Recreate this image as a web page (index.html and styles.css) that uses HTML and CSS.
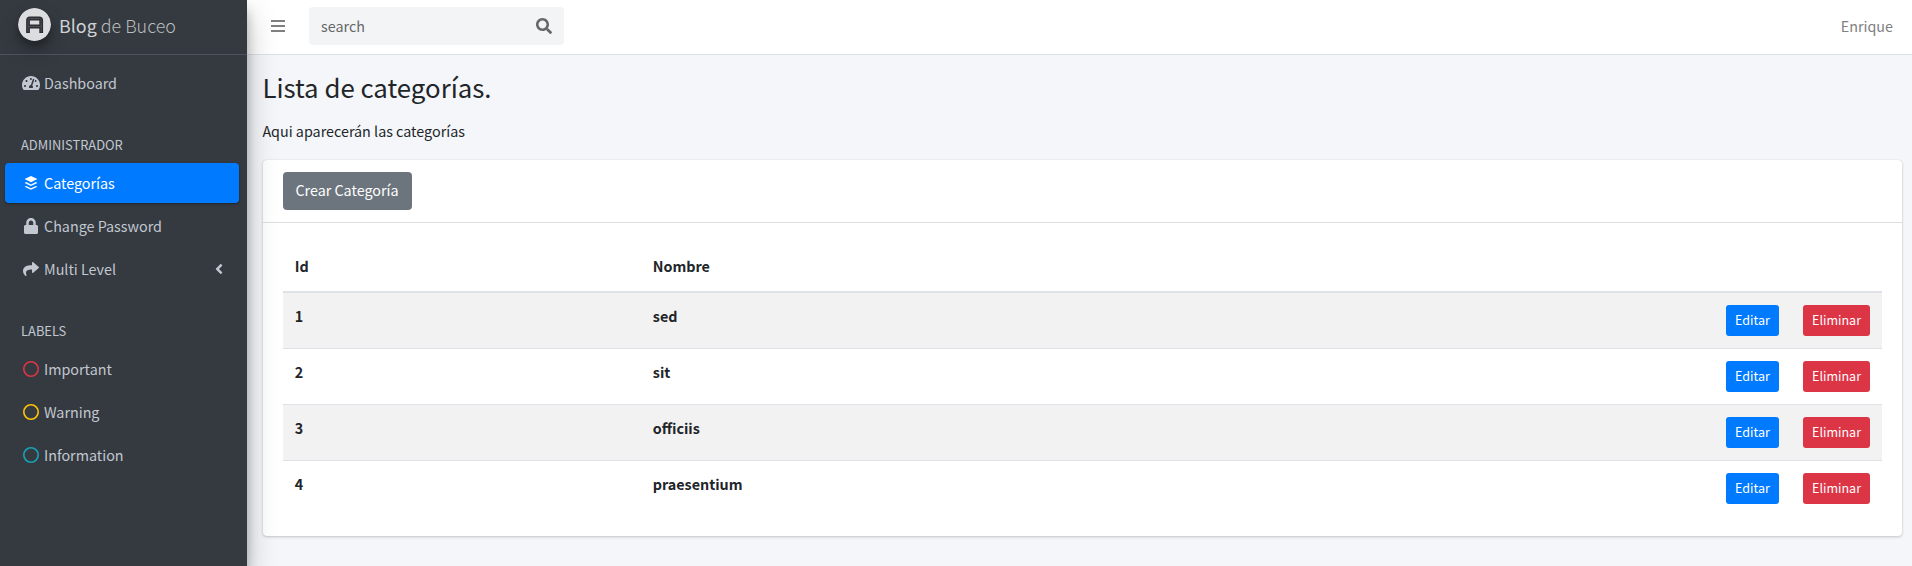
FILE: index.html
```html
<!DOCTYPE html>
<html lang="es">
<head>
<meta charset="utf-8">
<title>Blog de Buceo</title>
<link rel="stylesheet" href="styles.css">
</head>
<body>
<div class="wrapper">
  <aside class="sidebar">
    <a class="brand">
      <svg class="brand-logo" viewBox="0 0 33 33"><circle cx="16.5" cy="16.5" r="16.5" fill="#dcddde"/><path d="M10 25V12.500Q10 10.500 12 10.500H21.200Q23.200 10.500 23.200 12.500V25M10 18.500H23.200" fill="none" stroke="#2c2f33" stroke-width="3.800"/><path d="M10 24V12.500Q10 10.500 12 10.500H21.200Q23.200 10.500 23.200 12.500V24M10 18.500H23.200" fill="none" stroke="#53575b" stroke-width=".8"/></svg>
      <span class="brand-text"><span class="brand-strong">Blog</span> de Buceo</span>
    </a>
    <nav class="nav">
      <a class="nav-link"><span class="nav-icon"><svg width="18" height="16" viewBox="0 0 576 512"><path fill="currentColor" d="M288 32C128.94 32 0 160.94 0 320c0 52.8 14.25 102.26 39.06 144.8 5.61 9.62 16.3 15.2 27.44 15.2h443c11.14 0 21.83-5.58 27.44-15.2C561.75 422.26 576 372.8 576 320c0-159.06-128.94-288-288-288zm0 64c14.71 0 26.58 10.13 30.32 23.65-1.11 2.26-2.64 4.23-3.45 6.67l-9.22 27.67c-5.13 3.49-10.97 6.01-17.64 6.01-17.67 0-32-14.33-32-32S270.33 96 288 96zM96 384c-17.67 0-32-14.33-32-32s14.33-32 32-32 32 14.33 32 32-14.33 32-32 32zm48-160c-17.67 0-32-14.33-32-32s14.33-32 32-32 32 14.33 32 32-14.33 32-32 32zm246.77-72.41l-61.33 184C343.13 347.33 352 364.54 352 384c0 11.72-3.38 22.55-8.88 32H232.88c-5.5-9.45-8.88-20.28-8.88-32 0-33.94 26.5-61.43 59.9-63.59l61.34-184.01c4.17-12.56 17.73-19.45 30.36-15.17 12.57 4.19 19.35 17.79 15.17 30.36zm14.66 57.2l15.52-46.55c3.47-1.29 7.13-2.23 11.05-2.23 17.67 0 32 14.33 32 32s-14.33 32-32 32c-11.38-.01-20.89-6.28-26.57-15.22zM480 384c-17.67 0-32-14.33-32-32s14.33-32 32-32 32 14.33 32 32-14.33 32-32 32z"/></svg></span>Dashboard</a>
      <div class="nav-header">ADMINISTRADOR</div>
      <a class="nav-link active"><span class="nav-icon"><svg width="14" height="16" viewBox="0 0 14 16"><path fill="currentColor" d="M7 1L13.4 4.1L7 7.2L.6 4.1Z"/><path fill="currentColor" d="M.6 7.9L2.2 7.1L7 9.4L11.8 7.1L13.4 7.9L7 11ZM.6 11.7L2.2 10.9L7 13.2L11.8 10.9L13.4 11.7L7 14.8Z"/></svg></span>Categorías</a>
      <a class="nav-link"><span class="nav-icon"><svg width="14" height="16" viewBox="0 0 448 512"><path fill="currentColor" d="M400 224h-24v-72C376 68.2 307.8 0 224 0S72 68.2 72 152v72H48c-26.5 0-48 21.5-48 48v192c0 26.5 21.5 48 48 48h352c26.5 0 48-21.5 48-48V272c0-26.5-21.5-48-48-48zm-104 0H152v-72c0-39.7 32.3-72 72-72s72 32.3 72 72v72z"/></svg></span>Change Password</a>
      <a class="nav-link"><span class="nav-icon"><svg width="16" height="16" viewBox="0 0 512 512"><path fill="currentColor" d="M503.691 189.836L327.687 37.851C312.281 24.546 288 35.347 288 56.015v80.053C127.371 137.907 0 170.1 0 322.326c0 61.441 39.581 122.309 83.333 154.132 13.653 9.931 33.111-2.533 28.077-18.631C66.066 312.814 132.917 274.316 288 272.085V360c0 20.7 24.3 31.453 39.687 18.164l176.004-152c11.071-9.562 11.086-26.753 0-36.328z"/></svg></span>Multi Level<svg class="nav-arrow" width="8" height="16" viewBox="0 0 256 512"><path fill="currentColor" d="M31.7 239l136-136c9.4-9.4 24.6-9.4 33.9 0l22.6 22.6c9.4 9.4 9.4 24.6 0 33.9L127.9 256l96.4 96.4c9.4 9.4 9.4 24.6 0 33.9L201.7 409c-9.4 9.4-24.6 9.4-33.9 0l-136-136c-9.5-9.4-9.5-24.6-.1-34z"/></svg></a>
      <div class="nav-header">LABELS</div>
      <a class="nav-link"><span class="nav-icon"><svg class="ring ring-danger" viewBox="0 0 16 16"><circle cx="8" cy="8" r="7.200"/></svg></span>Important</a>
      <a class="nav-link"><span class="nav-icon"><svg class="ring ring-warning" viewBox="0 0 16 16"><circle cx="8" cy="8" r="7.200"/></svg></span>Warning</a>
      <a class="nav-link"><span class="nav-icon"><svg class="ring ring-info" viewBox="0 0 16 16"><circle cx="8" cy="8" r="7.200"/></svg></span>Information</a>
    </nav>
  </aside>
  <div class="page">
    <header class="topbar">
      <svg class="bars" width="14" height="16" viewBox="0 0 14 16"><path fill="currentColor" d="M0 2h14v2H0zM0 7h14v2H0zM0 12h14v2H0z"/></svg>
      <div class="search"><span>search</span><svg width="16" height="16" viewBox="0 0 512 512"><path fill="currentColor" d="M505 442.7L405.3 343c-4.5-4.500-10.600-7-17-7H372c27.600-35.300 44-79.700 44-128C416 93.100 322.900 0 208 0S0 93.100 0 208s93.100 208 208 208c48.300 0 92.700-16.400 128-44v16.300c0 6.400 2.500 12.500 7 17l99.700 99.700c9.400 9.400 24.600 9.400 33.900 0l28.300-28.300c9.400-9.400 9.400-24.600.1-34zM208 336c-70.700 0-128-57.200-128-128 0-70.700 57.200-128 128-128 70.700 0 128 57.200 128 128 0 70.700-57.200 128-128 128z"/></svg></div>
      <span class="user">Enrique</span>
    </header>
    <main class="content">
      <h1 class="title">Lista de categorías.</h1>
      <p class="lead">Aqui aparecerán las categorías</p>
      <section class="card">
        <div class="card-header"><a class="btn btn-secondary">Crear Categoría</a></div>
        <div class="card-body">
          <table class="table">
            <colgroup><col class="col-id"><col><col class="col-edit"><col class="col-delete"></colgroup>
            <thead><tr><th>Id</th><th>Nombre</th><th></th><th></th></tr></thead>
            <tbody>
              <tr><td>1</td><td>sed</td><td class="action"><a class="btn btn-sm btn-primary">Editar</a></td><td class="action"><a class="btn btn-sm btn-danger">Eliminar</a></td></tr>
              <tr><td>2</td><td>sit</td><td class="action"><a class="btn btn-sm btn-primary">Editar</a></td><td class="action"><a class="btn btn-sm btn-danger">Eliminar</a></td></tr>
              <tr><td>3</td><td>officiis</td><td class="action"><a class="btn btn-sm btn-primary">Editar</a></td><td class="action"><a class="btn btn-sm btn-danger">Eliminar</a></td></tr>
              <tr><td>4</td><td>praesentium</td><td class="action"><a class="btn btn-sm btn-primary">Editar</a></td><td class="action"><a class="btn btn-sm btn-danger">Eliminar</a></td></tr>
            </tbody>
          </table>
        </div>
      </section>
    </main>
  </div>
</div>
</body>
</html>
```
FILE: styles.css
```css
* { box-sizing: border-box; }
body {
  margin: 0;
  font-family: "Source Sans Pro", "Noto Sans CJK JP", "Noto Sans CJK SC", sans-serif;
  font-size: 14.33px;
  line-height: 24px;
  color: #212529;
  background: #f4f6f9;
}
.wrapper { display: flex; height: 100vh; overflow: hidden; }

.sidebar {
  position: relative;
  z-index: 1;
  flex: 0 0 247px;
  background: #343a40;
  color: #c2c7d0;
  box-shadow: 0 14px 28px rgba(0,0,0,.25), 0 10px 10px rgba(0,0,0,.22);
}
.brand {
  display: flex;
  align-items: flex-start;
  height: 55px;
  padding: 8px 0 0 18px;
  border-bottom: 1px solid #4b545c;
}
.brand-logo {
  width: 33px;
  height: 33px;
  border-radius: 50%;
  box-shadow: 0 10px 20px rgba(0,0,0,.19), 0 6px 6px rgba(0,0,0,.23);
}
.brand-text {
  margin: 5px 0 0 8px;
  font-size: 17.9px;
  font-weight: 300;
  color: #b9bcbe;
}
.brand-strong { font-weight: 400; color: #d0d2d4; }
.nav { padding: 8px 8px 0 5px; }
.nav-link {
  display: flex;
  align-items: center;
  height: 40px;
  margin-bottom: 3px;
  padding-left: 13px;
  border-radius: 4px;
}
.nav-link.active {
  background: #007bff;
  color: #fff;
  box-shadow: 0 1px 3px rgba(0,0,0,.12), 0 1px 2px rgba(0,0,0,.24);
}
.nav-icon {
  display: flex;
  justify-content: center;
  width: 26px;
}
.nav-arrow { margin: 0 16px 0 auto; }
.nav-header {
  height: 57px;
  padding: 27px 0 0 16px;
  font-size: 12.9px;
}
.ring { width: 16px; height: 16px; fill: none; stroke: currentColor; stroke-width: 1.6; }
.ring-danger { color: #dc3545; }
.ring-warning { color: #ffc107; }
.ring-info { color: #17a2b8; }

.page { flex: 1; min-width: 0; }
.topbar {
  display: flex;
  align-items: center;
  height: 55px;
  padding: 0 19px 2px 24px;
  background: #fff;
  border-bottom: 1px solid #dee2e6;
  color: #808080;
}
.search {
  display: flex;
  align-items: center;
  justify-content: space-between;
  width: 255px;
  height: 38px;
  margin-left: 24px;
  padding: 0 12px;
  border-radius: 4px;
  background: #f2f4f6;
  color: #666;
}
.user { margin-left: auto; }

.content { padding: 14px 10px 0 16px; }
.title { margin: 0 0 0 -.6px; font-size: 25.8px; font-weight: 400; line-height: 35px; }
.lead { margin: 15px 0 17px -.6px; }
.card {
  border-radius: 4px;
  background: #fff;
  box-shadow: 0 0 1px rgba(0,0,0,.125), 0 1px 3px rgba(0,0,0,.2);
}
.card-header {
  display: flex;
  height: 63px;
  padding: 12px 20px;
  border-bottom: 1px solid rgba(0,0,0,.125);
}
.card-body { padding: 20px; }
.btn {
  display: block;
  height: 38px;
  padding: 6px 13px 8px 12.4px;
  border-radius: 4px;
  color: #fff;
  font-weight: 400;
  white-space: nowrap;
}
.btn-secondary { width: 129px; background: #6c757d; }
.btn-sm { height: 31px; padding: 4px 9px 6px; border-radius: 3px; font-size: 12.54px; line-height: 21px; }
.btn-primary { background: #007bff; }
.btn-danger { background: #dc3545; }

.table { width: 100%; table-layout: fixed; border-spacing: 0; font-weight: 700; }
.col-id { width: 358px; }
.col-edit { width: 77px; }
.col-delete { width: 91px; }
.table th { height: 50px; padding: 11px 12px 13px 11.8px; border-bottom: 2px solid #dee2e6; text-align: left; }
.table td { padding: 11px 12px 12px 11.8px; vertical-align: top; }
.table .action { padding: 12px; }
.table tr + tr td { border-top: 1px solid #dee2e6; }
.table tbody tr:nth-child(odd) td { background: #f2f2f2; }
```
